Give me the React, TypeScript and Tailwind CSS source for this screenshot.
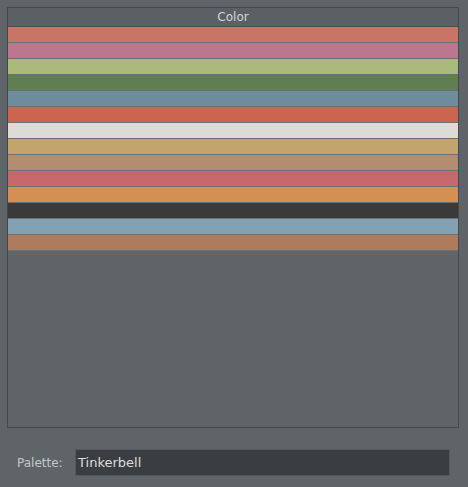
const colors = [
  '#c97565',
  '#bd7690',
  '#a9ba7a',
  '#5f7e52',
  '#6e8d9c',
  '#cc6550',
  '#dedbd6',
  '#c3a46c',
  '#b38d6f',
  '#c6686c',
  '#d48f52',
  '#3a3a3a',
  '#82a2b4',
  '#ae7c5c',
];

export default function App() {
  return (
    <div
      className="flex h-[487px] w-[468px] flex-col bg-[#5f6468] pt-[7px] pl-[7px] text-[12px] leading-none"
      style={{ fontFamily: '"DejaVu Sans", sans-serif' }}
    >
      <div className="flex h-[421px] w-[452px] flex-col border border-[#45494c] bg-[#5f6468]">
        <div className="flex h-[19px] shrink-0 items-center justify-center border-b border-[#494d51] bg-[#5b6064] text-[#d4d7d8]">
          Color
        </div>
        <div className="flex flex-col">
          {colors.map((c) => (
            <div key={c} className="h-[16px] border-b border-[#6a7075]" style={{ backgroundColor: c }} />
          ))}
        </div>
      </div>
      <div className="mt-[21px] flex items-center">
        <span className="ml-[10px] w-[58px] text-[#c4c8c9]">Palette:</span>
        <div className="flex h-[27px] w-[375px] items-center border border-[#55595d] bg-[#3a3e41] pl-[2px] text-[13px] text-[#dcdedf]">
          Tinkerbell
        </div>
      </div>
    </div>
  );
}
